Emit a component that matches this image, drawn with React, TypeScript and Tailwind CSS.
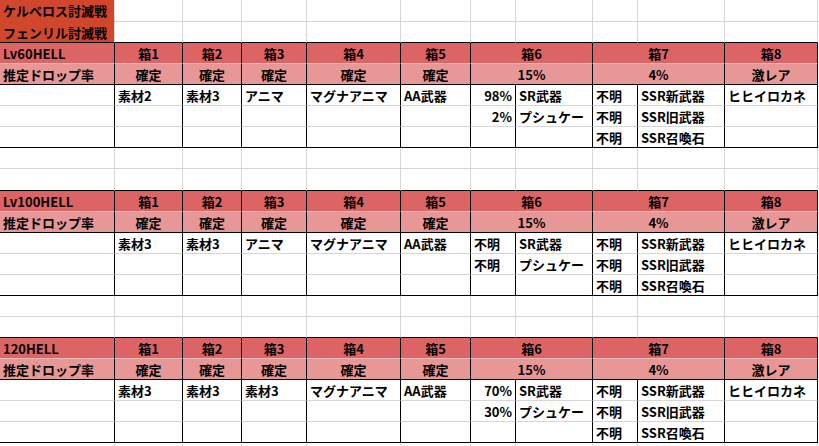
import React from "react";

type Align = "l" | "c" | "r";
interface CellProps {
  w: string;
  text?: string;
  bg?: string;
  r: string;
  b: string;
  align?: Align;
}

const Cell = ({ w, text, bg = "bg-white", r, b, align = "l" }: CellProps) => {
  const j = align === "c" ? "justify-center" : align === "r" ? "justify-end" : "justify-start";
  return (
    <div
      className={`${w} ${bg} shrink-0 border-r border-b ${r} ${b} flex items-center ${j} px-[3px] whitespace-nowrap overflow-visible`}
    >
      {text}
    </div>
  );
};

const W = [
  "w-[115px]",
  "w-[68px]",
  "w-[59px]",
  "w-[65px]",
  "w-[94px]",
  "w-[70px]",
  "w-[45px]",
  "w-[77px]",
  "w-[45px]",
  "w-[87px]",
  "w-[93px]",
];

const GRID_R = "border-r-[#d6d6d6]";
const GRID_B = "border-b-[#d6d6d6]";

const Filler = ({ b }: { b: string }) => (
  <div className={`flex-1 bg-white border-b ${b}`} />
);

const BlankRow = ({ h, last }: { h: string; last?: boolean }) => (
  <div className={`flex ${h}`}>
    {W.map((w, i) => (
      <Cell key={i} w={w} r={GRID_R} b={last ? "border-b-black" : GRID_B} />
    ))}
    <Filler b={GRID_B} />
  </div>
);

const TitleRow = ({ text, last, h }: { text: string; last?: boolean; h: string }) => (
  <div className={`flex ${h}`}>
    <Cell
      w={W[0]}
      text={text}
      bg="bg-[#d0472c]"
      r={GRID_R}
      b={last ? "border-b-black" : "border-b-[#d0472c]"}
    />
    {W.slice(1).map((w, i) => (
      <Cell key={i} w={w} r={GRID_R} b={last ? "border-b-black" : GRID_B} />
    ))}
    <Filler b={GRID_B} />
  </div>
);

interface DataRow {
  b?: string;
  c?: string;
  d?: string;
  e?: string;
  f?: string;
  g?: string;
  gAlign?: Align;
  h?: string;
  i?: string;
  j?: string;
  k?: string;
}

const Section = ({ label, rows }: { label: string; rows: DataRow[] }) => {
  const hb = "bg-[#dd6464]";
  const rb = "bg-[#e89797]";
  const sep = "border-b-[#f0b9b9]";
  return (
    <>
      <div className="flex h-[21px]">
        <Cell w={W[0]} text={label} bg={hb} r="border-r-black" b={sep} />
        <Cell w={W[1]} text="箱1" bg={hb} r="border-r-black" b={sep} align="c" />
        <Cell w={W[2]} text="箱2" bg={hb} r="border-r-black" b={sep} align="c" />
        <Cell w={W[3]} text="箱3" bg={hb} r="border-r-black" b={sep} align="c" />
        <Cell w={W[4]} text="箱4" bg={hb} r="border-r-black" b={sep} align="c" />
        <Cell w={W[5]} text="箱5" bg={hb} r="border-r-black" b={sep} align="c" />
        <Cell w="w-[122px]" text="箱6" bg={hb} r="border-r-black" b={sep} align="c" />
        <Cell w="w-[132px]" text="箱7" bg={hb} r="border-r-black" b={sep} align="c" />
        <Cell w={W[10]} text="箱8" bg={hb} r="border-r-black" b={sep} align="c" />
        <Filler b={GRID_B} />
      </div>
      <div className="flex h-[21px]">
        <Cell w={W[0]} text="推定ドロップ率" bg={rb} r="border-r-black" b="border-b-black" />
        <Cell w={W[1]} text="確定" bg={rb} r="border-r-black" b="border-b-black" align="c" />
        <Cell w={W[2]} text="確定" bg={rb} r="border-r-black" b="border-b-black" align="c" />
        <Cell w={W[3]} text="確定" bg={rb} r="border-r-black" b="border-b-black" align="c" />
        <Cell w={W[4]} text="確定" bg={rb} r="border-r-black" b="border-b-black" align="c" />
        <Cell w={W[5]} text="確定" bg={rb} r="border-r-black" b="border-b-black" align="c" />
        <Cell w="w-[122px]" text="15%" bg={rb} r="border-r-black" b="border-b-black" align="c" />
        <Cell w="w-[132px]" text="4%" bg={rb} r="border-r-black" b="border-b-black" align="c" />
        <Cell w={W[10]} text="激レア" bg={rb} r="border-r-black" b="border-b-black" align="c" />
        <Filler b={GRID_B} />
      </div>
      {rows.map((row, idx) => {
        const b = idx === rows.length - 1 ? "border-b-black" : GRID_B;
        const r = "border-r-black";
        return (
          <div key={idx} className="flex h-[21px]">
            <Cell w={W[0]} r={r} b={b} />
            <Cell w={W[1]} text={row.b} r={r} b={b} />
            <Cell w={W[2]} text={row.c} r={r} b={b} />
            <Cell w={W[3]} text={row.d} r={r} b={b} />
            <Cell w={W[4]} text={row.e} r={r} b={b} />
            <Cell w={W[5]} text={row.f} r={r} b={b} />
            <Cell w={W[6]} text={row.g} r={r} b={b} align={row.gAlign ?? "r"} />
            <Cell w={W[7]} text={row.h} r={r} b={b} />
            <Cell w={W[8]} text={row.i} r={r} b={b} />
            <Cell w={W[9]} text={row.j} r={r} b={b} />
            <Cell w={W[10]} text={row.k} r={r} b={b} />
            <Filler b={GRID_B} />
          </div>
        );
      })}
    </>
  );
};

export default function App() {
  return (
    <div className="w-[819px] h-[446px] overflow-hidden bg-white text-black text-[13px] leading-none font-bold font-['Noto_Sans_CJK_JP','Noto_Sans',sans-serif]">
      <TitleRow text="ケルベロス討滅戦" h="h-[22px]" />
      <TitleRow text="フェンリル討滅戦" h="h-[21px]" last />
      <Section
        label="Lv60HELL"
        rows={[
          { b: "素材2", c: "素材3", d: "アニマ", e: "マグナアニマ", f: "AA武器", g: "98%", h: "SR武器", i: "不明", j: "SSR新武器", k: "ヒヒイロカネ" },
          { g: "2%", h: "プシュケー", i: "不明", j: "SSR旧武器" },
          { i: "不明", j: "SSR召喚石" },
        ]}
      />
      <BlankRow h="h-[21px]" />
      <BlankRow h="h-[22px]" last />
      <Section
        label="Lv100HELL"
        rows={[
          { b: "素材3", c: "素材3", d: "アニマ", e: "マグナアニマ", f: "AA武器", g: "不明", gAlign: "l", h: "SR武器", i: "不明", j: "SSR新武器", k: "ヒヒイロカネ" },
          { g: "不明", gAlign: "l", h: "プシュケー", i: "不明", j: "SSR旧武器" },
          { i: "不明", j: "SSR召喚石" },
        ]}
      />
      <BlankRow h="h-[21px]" />
      <BlankRow h="h-[21px]" last />
      <Section
        label="120HELL"
        rows={[
          { b: "素材3", c: "素材3", d: "素材3", e: "マグナアニマ", f: "AA武器", g: "70%", h: "SR武器", i: "不明", j: "SSR新武器", k: "ヒヒイロカネ" },
          { g: "30%", h: "プシュケー", i: "不明", j: "SSR旧武器" },
          { i: "不明", j: "SSR召喚石" },
        ]}
      />
      <BlankRow h="h-[21px]" />
    </div>
  );
}
